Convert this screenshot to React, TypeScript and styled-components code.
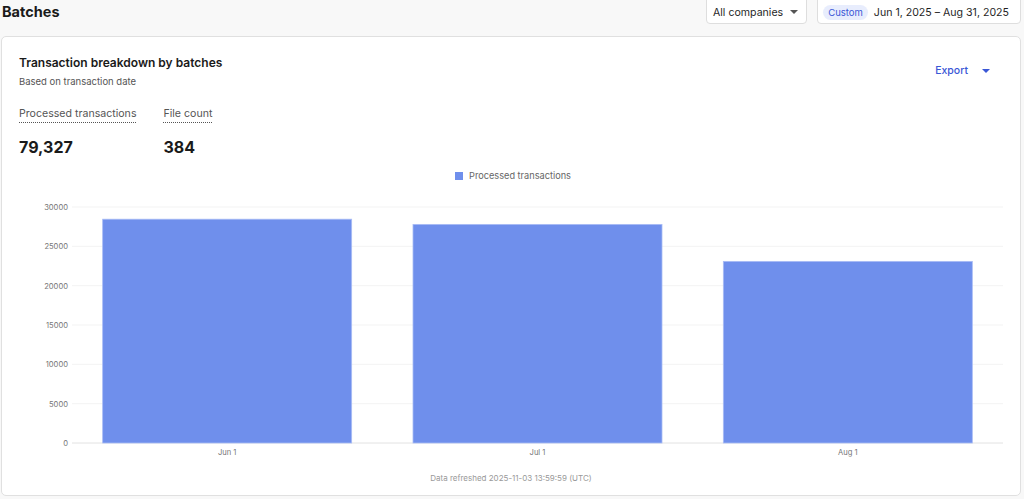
import styled, { createGlobalStyle } from 'styled-components';

const GlobalStyle = createGlobalStyle`
    html, body {
        margin: 0;
        padding: 0;
        background: #f8f8f8;
        font-family: Inter, 'Noto Sans', sans-serif;
        color: #1f1f1f;
    }
`;

const Page = styled.div`
    width: 1024px;
    height: 499px;
    overflow: hidden;
    padding: 0 3px 0 1px;
    box-sizing: border-box;
`;

const Header = styled.header`
    display: flex;
    justify-content: space-between;
    height: 32px;
    margin-top: -8px;
`;

const Title = styled.h1`
    margin: 0;
    padding-top: 10px;
    padding-left: 1px;
    font-size: 14.5px;
    font-weight: 700;
    line-height: 20px;
    color: #1a1a1a;
`;

const Controls = styled.div`
    display: flex;
    gap: 10px;
`;

const Control = styled.button<{ $padLeft?: number; $padRight?: number }>`
    display: flex;
    align-items: center;
    gap: 6px;
    height: 32px;
    box-sizing: border-box;
    padding: 8px ${(p) => p.$padRight ?? 8}px 0 ${(p) => p.$padLeft ?? 6}px;
    background: #fff;
    border: 1px solid #dedede;
    border-radius: 4px;
    font-family: inherit;
    font-size: 10.6px;
    color: #1f1f1f;
    cursor: pointer;
`;

const Caret = styled.span<{ $color?: string }>`
    width: 0;
    height: 0;
    border-left: 4px solid transparent;
    border-right: 4px solid transparent;
    border-top: 4px solid ${(p) => p.$color ?? '#555'};
    margin-left: ${(p) => (p.$color ? 14 : 1)}px;
`;

const Tag = styled.span`
    background: #e8edfd;
    color: #3a57d6;
    font-size: 9.5px;
    padding: 2px 5px;
    border-radius: 8px;
`;

const Card = styled.section`
    margin-top: 12px;
    height: 460px;
    box-sizing: border-box;
    background: #fff;
    border: 1px solid #e0e0e0;
    border-radius: 5px;
    padding: 17px 17px 0;
    display: flex;
    flex-direction: column;
`;

const CardTop = styled.div`
    display: flex;
    justify-content: space-between;
    align-items: flex-start;
`;

const CardTitle = styled.h2`
    margin: 0;
    font-size: 12px;
    font-weight: 600;
    line-height: 18px;
    color: #1a1a1a;
`;

const Subtitle = styled.p`
    margin: 4px 0 0;
    font-size: 9.5px;
    color: #555;
`;

const ExportButton = styled.button`
    display: flex;
    align-items: center;
    margin: 10px 13px 0 0;
    background: none;
    border: none;
    padding: 0;
    font-family: inherit;
    font-size: 10.5px;
    font-weight: 500;
    color: #3a57d6;
    cursor: pointer;
`;

const Stats = styled.div`
    display: flex;
    gap: 27px;
    margin-top: 20px;
`;

const Stat = styled.div`
    display: flex;
    flex-direction: column;
    align-items: flex-start;
`;

const StatLabel = styled.span`
    font-size: 10.6px;
    color: #555;
    line-height: 14px;
    border-bottom: 1px dotted #555;
    padding-bottom: 1px;
`;

const StatValue = styled.span`
    margin-top: 14px;
    font-size: 16px;
    font-weight: 700;
    color: #1a1a1a;
`;

const Legend = styled.div`
    display: flex;
    justify-content: center;
    align-items: center;
    gap: 6px;
    margin-top: 13px;
    padding-left: 4px;
    font-size: 9.2px;
    color: #666;
`;

const Swatch = styled.span`
    width: 8px;
    height: 8px;
    background: #6f8fec;
`;

const Footnote = styled.p`
    margin: 0;
    text-align: center;
    font-size: 8px;
    color: #999;
`;

const data = [
    { label: 'Jun 1', value: 28450 },
    { label: 'Jul 1', value: 27790 },
    { label: 'Aug 1', value: 23087 },
];

const ticks = [0, 5000, 10000, 15000, 20000, 25000, 30000];

function BarChart() {
    // plot geometry in the svg's own coordinates
    const left = 70;
    const right = 1001;
    const top = 26;
    const bottom = 262;
    const max = 30000;
    const band = (right - left) / data.length;
    const barWidth = 249;
    const y = (v: number) => bottom - (v / max) * (bottom - top);

    return (
        <svg width="1005" height="292" style={{ display: 'block', marginLeft: '-17px' }}>
            {ticks.map((t) => (
                <g key={t}>
                    <line
                        x1={left}
                        x2={right}
                        y1={y(t)}
                        y2={y(t)}
                        stroke={t === 0 ? '#e2e2e2' : '#f3f3f3'}
                        strokeWidth={1}
                    />
                    <text
                        x={left - 4}
                        y={y(t) + 3}
                        textAnchor="end"
                        fontSize="7.6"
                        fill="#777"
                        fontFamily="Inter, sans-serif"
                    >
                        {t}
                    </text>
                </g>
            ))}
            {data.map((d, i) => {
                const cx = left + band * i + band / 2;
                return (
                    <g key={d.label}>
                        <rect
                            x={cx - barWidth / 2}
                            y={y(d.value)}
                            width={barWidth}
                            height={bottom - y(d.value)}
                            fill="#6f8fec"
                            stroke="#a9bcf5"
                            strokeWidth={0.8}
                        />
                        <text
                            x={cx}
                            y={bottom + 12}
                            textAnchor="middle"
                            fontSize="7.6"
                            fill="#777"
                            fontFamily="Inter, sans-serif"
                        >
                            {d.label}
                        </text>
                    </g>
                );
            })}
        </svg>
    );
}

export default function App() {
    return (
        <Page>
            <GlobalStyle />
            <Header>
                <Title>Batches</Title>
                <Controls>
                    <Control>
                        All companies
                        <Caret />
                    </Control>
                    <Control $padLeft={5} $padRight={11}>
                        <Tag>Custom</Tag>
                        Jun 1, 2025 – Aug 31, 2025
                    </Control>
                </Controls>
            </Header>
            <Card>
                <CardTop>
                    <div>
                        <CardTitle>Transaction breakdown by batches</CardTitle>
                        <Subtitle>Based on transaction date</Subtitle>
                    </div>
                    <ExportButton>
                        Export
                        <Caret $color="#3a57d6" />
                    </ExportButton>
                </CardTop>
                <Stats>
                    <Stat>
                        <StatLabel>Processed transactions</StatLabel>
                        <StatValue>79,327</StatValue>
                    </Stat>
                    <Stat>
                        <StatLabel>File count</StatLabel>
                        <StatValue>384</StatValue>
                    </Stat>
                </Stats>
                <Legend>
                    <Swatch />
                    Processed transactions
                </Legend>
                <BarChart />
                <Footnote>Data refreshed 2025-11-03 13:59:59 (UTC)</Footnote>
            </Card>
        </Page>
    );
}
